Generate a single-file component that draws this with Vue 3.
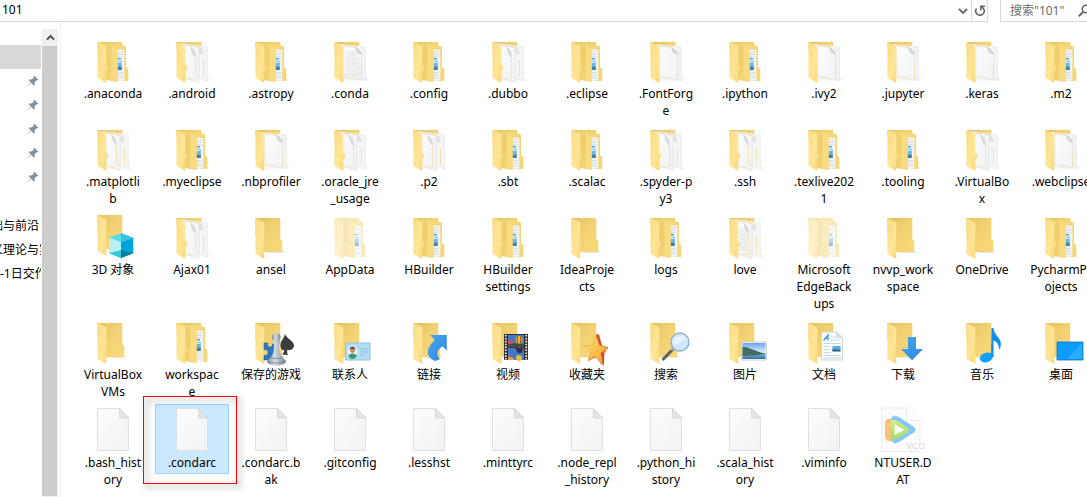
<script setup>
import { ref } from 'vue'

const address = ref('101')
const query = ref('')
const selected = ref('.condarc')

const pinned = [1, 2, 3, 4, 5]
const places = [
  { text: '础与前沿', cut: true },
  { text: '义理论与实', cut: true },
  { text: '-1日交作', cut: false }
]

const f = (kind, ...lines) => ({ kind, lines, name: lines.join('') })

const items = [
  f('full', '.anaconda'), f('two', '.android'), f('full', '.astropy'), f('text', '.conda'),
  f('full', '.config'), f('two', '.dubbo'), f('full', '.eclipse'), f('one', '.FontForg', 'e'),
  f('full', '.ipython'), f('one', '.ivy2'), f('one', '.jupyter'), f('one', '.keras'), f('full', '.m2'),

  f('two', '.matplotli', 'b'), f('full', '.myeclipse'), f('one', '.nbprofiler'), f('two', '.oracle_jre', '_usage'),
  f('two', '.p2'), f('full', '.sbt'), f('full', '.scalac'), f('two', '.spyder-p', 'y3'),
  f('two', '.ssh'), f('full', '.texlive202', '1'), f('full', '.tooling'), f('two', '.VirtualBo', 'x'), f('one', '.webclipse'),

  f('cube', '3D 对象'), f('two', 'Ajax01'), f('empty', 'ansel'), f('faded', 'AppData'),
  f('full', 'HBuilder'), f('full', 'HBuilder', 'settings'), f('empty', 'IdeaProje', 'cts'), f('full', 'logs'),
  f('twotext', 'love'), f('faded', 'Microsoft', 'EdgeBack', 'ups'), f('empty', 'nvvp_work', 'space'), f('empty', 'OneDrive'), f('full', 'PycharmPr', 'ojects'),

  f('empty', 'VirtualBox', 'VMs'), f('full', 'workspac', 'e'), f('games', '保存的游戏'), f('contacts', '联系人'),
  f('link', '链接'), f('video', '视频'), f('star', '收藏夹'), f('search', '搜索'),
  f('picture', '图片'), f('document', '文档'), f('download', '下载'), f('music', '音乐'), f('desktop', '桌面'),

  f('file', '.bash_hist', 'ory'), f('file', '.condarc'), f('file', '.condarc.b', 'ak'), f('file', '.gitconfig'),
  f('file', '.lesshst'), f('file', '.minttyrc'), f('file', '.node_repl', '_history'), f('file', '.python_hi', 'story'),
  f('file', '.scala_hist', 'ory'), f('file', '.viminfo'), f('vcd', 'NTUSER.D', 'AT')
]

const isFull = (k) => k === 'full' || k === 'faded'
const isOne = (k) => k === 'one' || k === 'text'
const isTwo = (k) => k === 'two' || k === 'twotext'
const isFolder = (k) => k !== 'file' && k !== 'vcd'
const isPlain = (k) => isFolder(k) && !isFull(k) && !isOne(k) && !isTwo(k)
</script>

<template>
  <div class="explorer">
    <svg class="defs" width="0" height="0" aria-hidden="true">
      <defs>
        <linearGradient id="back" x1="0" y1="0" x2="1" y2="1">
          <stop offset="0" stop-color="#e6c260" /><stop offset=".5" stop-color="#f2d274" /><stop offset="1" stop-color="#f9da76" />
        </linearGradient>
        <linearGradient id="front" x1="0" y1="0" x2="1" y2="1">
          <stop offset="0" stop-color="#f9dc82" /><stop offset=".6" stop-color="#ffe597" /><stop offset="1" stop-color="#f8d775" />
        </linearGradient>
        <linearGradient id="paper" x1="0" y1="0" x2="1" y2="1">
          <stop offset="0" stop-color="#fcfcfd" /><stop offset="1" stop-color="#f0f2f4" />
        </linearGradient>
        <linearGradient id="blue" x1="0" y1="0" x2="1" y2="1">
          <stop offset="0" stop-color="#4aa9f2" /><stop offset="1" stop-color="#2a83dc" />
        </linearGradient>
        <linearGradient id="pawn" x1="0" y1="0" x2="1" y2="0">
          <stop offset="0" stop-color="#7f8d98" /><stop offset=".4" stop-color="#d3dce2" /><stop offset="1" stop-color="#7b8790" />
        </linearGradient>
        <linearGradient id="gold" x1="0" y1="0" x2="1" y2="1">
          <stop offset="0" stop-color="#ffe27a" /><stop offset="1" stop-color="#f6a021" />
        </linearGradient>
        <linearGradient id="sky" x1="0" y1="0" x2="0" y2="1">
          <stop offset="0" stop-color="#6aa5f2" /><stop offset="1" stop-color="#e3f1fb" />
        </linearGradient>
        <linearGradient id="sea" x1="0" y1="0" x2="0" y2="1">
          <stop offset="0" stop-color="#8ac0dc" /><stop offset="1" stop-color="#2d6fa6" />
        </linearGradient>
        <linearGradient id="lime" x1="0" y1="0" x2="0" y2="1">
          <stop offset="0" stop-color="#d3ef84" /><stop offset="1" stop-color="#a2da6c" />
        </linearGradient>
      </defs>
    </svg>

    <header class="topbar">
      <div class="address">
        <input v-model="address" class="path" type="text" aria-label="地址" />
        <button class="drop" type="button" aria-label="历史记录">
          <svg width="10" height="6" viewBox="0 0 10 6"><path d="M1 1l4 4 4-4" fill="none" stroke="#666" stroke-width="1.8" /></svg>
        </button>
        <button class="reload" type="button" aria-label="刷新">
          <svg width="12" height="12" viewBox="0 0 12 12">
            <path d="M2.600 3.500A4.200 4.200 0 1 0 9.200 3.300L7.500 1.800" fill="none" stroke="#666" stroke-width="1.6" />
            <path d="M6.800 5.500V1.300H11" fill="none" stroke="#666" stroke-width="1.5" />
          </svg>
        </button>
      </div>
      <div class="search">
        <input v-model="query" type="text" placeholder="搜索&quot;101&quot;" aria-label="搜索" />
        <svg width="13" height="13" viewBox="0 0 13 13">
          <circle cx="8" cy="5" r="3.7" fill="none" stroke="#666" stroke-width="1.5" />
          <path d="M5.4 7.6L.8 12.2" stroke="#666" stroke-width="2" />
        </svg>
      </div>
    </header>

    <div class="body">
      <nav class="tree">
        <div class="node current"></div>
        <div v-for="p in pinned" :key="p" class="node">
          <svg class="pin" width="12" height="12" viewBox="0 0 12 12">
            <path d="M7.4.8L11.2 4.6 10.2 5.4 9.5 5.2 7.6 7.2 7.8 9.6 6.8 10.4 4.4 8 .8 11.4 .6 11.2 4 7.6 1.6 5.2 2.4 4.2 4.8 4.4 6.8 2.5 6.6 1.8z" fill="#84909b" />
          </svg>
        </div>
        <div class="node"></div>
        <div v-for="p in places" :key="p.text" class="node"><span :class="{ cut: p.cut }">{{ p.text }}</span></div>
      </nav>
      <div class="scroll">
        <button type="button" aria-label="向上滚动">
          <svg width="9" height="7" viewBox="0 0 9 7"><path d="M1 5.6L4.5 2 8 5.6" fill="none" stroke="#505050" stroke-width="2" /></svg>
        </button>
        <div class="thumb"></div>
      </div>

      <main class="files">
        <button
          v-for="it in items"
          :key="it.name"
          type="button"
          class="item"
          :class="{ selected: it.name === selected }"
          @click="selected = it.name"
        >
          <svg class="icon" :class="{ faded: it.kind === 'faded', raised: it.kind === 'cube' }" width="48" height="47" viewBox="0 0 48 47" aria-hidden="true">
            <g v-if="isFolder(it.kind)">
              <template v-if="isPlain(it.kind)">
                <path d="M33 36L38 38 35 39H17z" fill="#e6e6e6" />
                <path d="M8.500 4H33.300V25L35.300 27V38H17L8.500 20z" fill="url(#back)" />
              </template>
              <path v-else d="M8.500 4H33.300V12H8.500z" fill="url(#back)" />

              <template v-if="isFull(it.kind)">
                <path d="M20 6L33 7 37 8.500V29L39.300 31V43H33L20 40z" fill="#f5d778" />
                <path d="M27 11L35.300 12V42.500L27 43z" fill="#f1f3f5" />
                <path d="M28.500 14h5.500M28.500 16.500h5.500M28.500 19h5.500M28.500 34.500h5.500M28.500 37h5.500M28.500 39.500h5.500" stroke="#cfd6dd" stroke-width=".8" />
                <path d="M28 19.500l4 .5v2l-4-.5zM28 23.500l4.800-.5v5.500H28z" fill="#6bb4e6" />
                <path d="M28 28.500h4.800V32H28z" fill="#3e7fa2" />
                <path d="M28 24.500h4.500" stroke="#d7effa" />
                <path d="M9 4L22 7 28.600 11V44L17 42z" fill="#f2d478" />
                <path d="M22.500 7L28.600 11V44L22.500 42z" fill="#f9db80" />
                <path d="M17 9V42L20 40V31L22.500 27V8z" fill="#ecca68" opacity=".6" />
              </template>

              <template v-if="isOne(it.kind)">
                <path d="M37 40L42.500 41.500 39 43z" fill="#e3e3e3" />
                <path d="M14 6.500L37 8.500V42H17z" fill="#fafafa" stroke="#e7e7e7" stroke-width=".6" />
                <path d="M35.500 9L39.500 9.500V42.500L35.500 42z" fill="#f1f2f4" stroke="#e0e2e4" stroke-width=".5" />
                <path d="M18 8.500L30.500 9.500 35.500 15.500V42L18 39.500z" fill="url(#paper)" stroke="#dfe1e3" stroke-width=".6" />
                <path d="M17 7.500L30 8.700 32 11" fill="none" stroke="#f5dfa5" stroke-width=".8" />
                <path d="M29.500 9.500L31 14.500 35.500 16.500 33.500 12z" fill="#d9dbdd" stroke="#bfc1c3" stroke-width=".5" />
                <path d="M35.500 27V41M18 38.500L30 40.300" stroke="#f4e0a8" stroke-width=".7" />
                <g v-if="it.kind === 'text'" stroke="#d2d5d8" stroke-width=".7" stroke-dasharray="1.5 .5">
                  <path d="M20 13l9 .5M20 15l10 .5M20 17l11 .5M20 19l12.500 .5M20 21l13.500 .5M20 23l13.500 .5M20 25l13.500 .5M20 27l13.500 .5M20 29l13.500 .5M20 31l13.500 .5M20 33l13.500 1M20 35l13.500 1.500M20 37l13.500 1.500" />
                </g>
              </template>

              <template v-if="isTwo(it.kind)">
                <path d="M36 41L43 41.700 39 43z" fill="#e0e0e0" />
                <path d="M14 5.500L29 7.500 39.300 9V42.500L29 41z" fill="#f4f5f6" stroke="#e2e4e6" stroke-width=".6" />
                <path d="M33 9.500L35 16 30 14z" fill="#e6e7e8" stroke="#ccc" stroke-width=".5" />
                <path d="M35.500 22V39" stroke="#f3dc9d" stroke-width=".8" />
                <path d="M12 5.500L31 9.500V44.500L17.500 40.500z" fill="url(#paper)" stroke="#dddfe1" stroke-width=".6" />
                <path d="M13 6.200L24 8.500M26 8L32 10" stroke="#f3dc9d" stroke-width=".8" />
                <path d="M23 9.500L24.500 15.500 27.500 19.500 26.500 13z" fill="#e0e2e4" stroke="#bfc1c3" stroke-width=".5" />
                <path d="M27.600 20V41M18 39.500L26 41.500" stroke="#f3dc9d" stroke-width=".7" fill="none" />
                <path v-if="it.kind === 'twotext'" d="M18.500 15l5 1M18.500 17l7 1M18.500 19l8 1M18.500 21l8 1M18.500 23l8 1M18.500 25l8 1M18.500 27l8 1M18.500 29l8 1M18.500 31l8 1M18.500 33l8 1M18.500 35l8 1" stroke="#dcdfe1" stroke-width=".8" />
              </template>

              <path d="M8.500 4L17.300 8.500V45L8.500 40z" fill="url(#front)" />
              <path v-if="isFull(it.kind) || isTwo(it.kind)" d="M17 29L19 27V31L17.300 35z" fill="#fae08a" />
            </g>

            <g v-if="it.kind === 'cube'">
              <path d="M32 19.300L44.300 23.700 32 28.300 20 23.700z" fill="#5bd8e6" />
              <path d="M20 23.700L32 28.300V44L20 39.300z" fill="#8ee6ee" />
              <path d="M20 23.700L32 28.300V36L20 39.300z" fill="#b9f1f3" />
              <path d="M32 28.300L44.300 23.700V39.300L32 44z" fill="#00a3dc" />
              <path d="M32 36L44.300 39.300 32 44z" fill="#087f9f" />
              <path d="M20 39.300L32 36V44z" fill="#35c6d8" />
              <path d="M32 19.300L44.300 23.700 32 28.300z" fill="#36c1df" />
            </g>
            <g v-else-if="it.kind === 'games'">
              <path d="M17 24H21C20 26 21 28 23 28S26 26 25 24H30V41H17V36C19 37 21 36 21 33.500S19 30 17 31z" fill="#2f78bd" stroke="#1f5b98" stroke-width=".5" />
              <path d="M38 15C37 20 33 22 33.500 27C34 31 36 32 37.500 31C37 33 36 34.500 35 35.500L41 36C40 34 40 32 40.500 30.500C43 32 47 30 47 26.500C47 22 40 20 38 15z" fill="#3c3c3e" />
              <path d="M26.500 21H32.500L34 25H32C32 31 33 35 35.500 38L39 42C39 45 35 46.500 29.500 46.500S20 45 20 42L24 38C26.500 35 27 31 27 25H25z" fill="url(#pawn)" />
              <circle cx="29.300" cy="18.300" r="4.300" fill="url(#pawn)" />
              <path d="M23.500 38.500C27 40 32 40 35.500 38.500M20.500 42.500C25 44.500 34 44.500 38.500 42.500" fill="none" stroke="#6d7a84" stroke-width=".7" />
            </g>
            <g v-else-if="it.kind === 'contacts'">
              <path d="M19.500 24H44V41H19.500z" fill="#b4dcf3" stroke="#8fc2e4" />
              <circle cx="26.500" cy="32" r="5.200" fill="#e7f5fc" />
              <path d="M22.500 37C23 33.500 30 33.500 30.700 37C29 41 24 41 22.500 37z" fill="#389a72" />
              <circle cx="26.500" cy="31.500" r="2.400" fill="#c48964" />
              <path d="M23.800 31C23 26.500 30 26.500 29.300 31L28 29.500H25z" fill="#33302e" />
              <path d="M34 30h8M34 33h8M34 36h6" stroke="#8cc2e4" />
            </g>
            <path v-else-if="it.kind === 'link'" d="M25 16H41.800V31.500L37.500 27.300C32 31 30.500 35 35 40L30.500 42C21 39 20 29.500 30 21z" fill="url(#blue)" />
            <g v-else-if="it.kind === 'video'">
              <path d="M20 15H44V41H20z" fill="#34302e" />
              <path d="M21.800 16V41M42.200 16V41" stroke="#e8e8e8" stroke-width="1.800" stroke-dasharray="1.600 1.300" />
              <path d="M24 16H40V27.500H24zM24 29H40V41H24z" fill="#4178c8" />
              <path d="M24 21L30 23 32 27.500H24zM24 36L30 40V41H24z" fill="#d74b68" />
              <path d="M24 25.500L31 24 40 25.500V27.500H24z" fill="#2d5638" />
              <ellipse cx="35" cy="21" rx="3.600" ry="4" fill="#e5bb32" />
              <path d="M33.500 17.500Q32 21 34 25M36.500 17.500Q38 21 36 25" stroke="#a32d29" fill="none" />
              <ellipse cx="35.500" cy="31" rx="3" ry="3" fill="#8d4f75" />
              <circle cx="35" cy="39" r="3" fill="#e7bc38" />
              <path d="M24 41V38.500Q27 37 30 39.500V41z" fill="#dda44b" />
              <path d="M31.500 29L39 29 37.500 34H34z" fill="#382850" />
            </g>
            <g v-else-if="it.kind === 'star'">
              <path d="M33.700 15L36 15.500 39 26.500 45.300 28.500 41.500 33.500 40.800 46.500 38 45 33 38 25 42z" fill="#cf5230" />
              <path d="M32.500 16L36.500 26.500 45 29.300 37.500 34 39.500 45.500 32 37 25 41.500 28 33 21 26.700 29.500 26.500z" fill="url(#gold)" stroke="#eda33a" stroke-width=".6" />
            </g>
            <g v-else-if="it.kind === 'search'">
              <path d="M31 30L20.500 41" stroke="#59636c" stroke-width="3" />
              <path d="M32 28L29 31" stroke="#a9b3bb" stroke-width="2.500" />
              <circle cx="38" cy="23" r="9" fill="#cde8fa" stroke="#8fb0c6" stroke-width="1.300" />
              <path d="M31.500 22A6.800 6.800 0 0 1 44 20C40 20 37 25 32 26z" fill="#eaf7ff" />
            </g>
            <g v-else-if="it.kind === 'picture'">
              <path d="M20.500 23H45.500V41H20.500z" fill="#fff" stroke="#cfcfcf" />
              <path d="M21.500 24H44.500V34H21.500z" fill="url(#sky)" />
              <path d="M21.500 34H44.500V40H21.500z" fill="url(#sea)" />
              <path d="M21.500 28C27 27 31 32 44.500 34.500L38 36 21.500 37z" fill="#456c62" />
            </g>
            <g v-else-if="it.kind === 'document'">
              <path d="M21.500 13H36.500L42.500 18.500V41H21.500z" fill="#fafbfc" stroke="#d0d3d6" />
              <path d="M36.500 13V18.500H42.500z" fill="#e1e4e7" stroke="#c8ccd0" stroke-width=".6" />
              <path d="M23.500 21.500L28 16V21.500M25 19.500H28" fill="none" stroke="#3c9bd4" stroke-width="1.200" />
              <path d="M31 18h4M31 21h9M23.500 24.500h17M23.500 27.500h7M23.500 30.500h7M23.500 33.500h7M23.500 36.500h17M23.500 39h17" stroke="#bedcee" />
              <path d="M32.500 27H40.500V32H32.500z" fill="#5ba9e3" /><path d="M32.500 30L40.500 31V32.500H32.500z" fill="#31607e" />
            </g>
            <path v-else-if="it.kind === 'download'" d="M29 18H37V30H44L33 41.300 22 30H29z" fill="url(#blue)" />
            <g v-else-if="it.kind === 'music'">
              <ellipse cx="28.300" cy="38.500" rx="6.600" ry="4.800" transform="rotate(-18 28.300 38.500)" fill="#12a0ff" />
              <path d="M33.500 9H35.500C36 17 45 19 42.500 28L41 31C41 25 39 23 35.500 21.500V38H33z" fill="#0d8fee" />
            </g>
            <g v-else-if="it.kind === 'desktop'">
              <path d="M20 23H46V41H20z" fill="#0c9cfb" stroke="#1273bd" stroke-width=".8" />
              <path d="M45 24V40H30z" fill="#29adff" />
            </g>
            <g v-else-if="it.kind === 'file'">
              <path d="M8.500 1.500H30.500L39.500 11V43.500H8.500z" fill="url(#paper)" stroke="#dfe0e2" />
              <path d="M30.500 1.500L39.500 11H30.500z" fill="#e4e5e7" stroke="#d2d3d5" stroke-width=".8" />
            </g>
            <g v-else-if="it.kind === 'vcd'">
              <path d="M2.500 1H27.500L41 13.500V36M41 44.500H2.500V1" fill="#fbfbfb" stroke="#ececec" />
              <path d="M27.500 1V13.500H41" fill="#fff" stroke="#e8e8e8" />
              <path d="M13 12H9Q6 12 6 17V29Q6 34 10 34H13z" fill="#ffc07e" />
              <path d="M14 9Q17 8 23 12L35 20Q38 22.500 35 25.500L20 35Q14 38 12 33V13Q12 10 14 9z" fill="#86c8fb" />
              <path d="M13 13Q15 12 20 15L29 21Q31 23 29 25L18 32Q13 34 11.500 30V16Q11.500 13 13 13z" fill="url(#lime)" />
              <path d="M15.500 17.500L25.500 23 15.500 28z" fill="#fff" />
              <text x="27" y="42" font-size="9" font-family="Liberation Sans, Arial, sans-serif" fill="#d8d8d8">VCD</text>
            </g>
          </svg>
          <span class="label"><span v-for="line in it.lines" :key="line">{{ line }}</span></span>
          <span v-if="it.name === '.condarc'" class="mark"></span>
        </button>
      </main>
    </div>
  </div>
</template>

<style>
html,
body {
  margin: 0;
  background: #fff;
}
</style>

<style scoped>
.explorer {
  display: flex;
  flex-direction: column;
  min-height: 100vh;
  overflow: hidden;
  background: #fff;
  color: #000;
  font: 12px/17px "Noto Sans", "Noto Sans CJK SC", sans-serif;
}
.defs {
  position: absolute;
}
button,
input {
  padding: 0;
  border: 0;
  background: none;
  color: inherit;
  font: inherit;
}
.topbar {
  display: flex;
  gap: 12px;
  height: 22px;
  box-sizing: border-box;
}
.address {
  display: flex;
  flex: 1;
  border: solid #d9d9d9;
  border-width: 0 1px 1px 0;
}
.path {
  flex: 1;
  min-width: 0;
  padding: 0 0 2px 2px;
}
.drop,
.reload {
  display: flex;
  align-items: center;
  justify-content: center;
  width: 16px;
}
.reload {
  border-left: 1px solid #d9d9d9;
}
.search {
  display: flex;
  align-items: center;
  width: 87px;
  box-sizing: border-box;
  padding-left: 9px;
  overflow: hidden;
  border: solid #d9d9d9;
  border-width: 0 0 1px 1px;
}
.search input {
  flex: none;
  width: 68px;
}
.search input::placeholder {
  color: #6d6d6d;
  opacity: 1;
}
.search svg {
  flex: none;
}
.body {
  display: flex;
  flex: 1;
}
.tree {
  width: 41px;
  padding-top: 23px;
  overflow: hidden;
}
.node {
  display: flex;
  align-items: center;
  height: 24px;
  white-space: nowrap;
}
.node.current {
  background: #d9d9d9;
}
.pin {
  margin-left: 27px;
}
.cut {
  margin-left: -9px;
}
.scroll {
  display: flex;
  flex-direction: column;
  width: 16px;
  margin: 7px 2px 0 1px;
  background: #f0f0f0;
}
.scroll button {
  display: flex;
  align-items: center;
  justify-content: center;
  height: 17px;
}
.thumb {
  flex: 1;
  margin: 0 1px 1px 0;
  background: #cdcdcd;
}
.files {
  display: grid;
  flex: 1;
  grid-template-columns: repeat(13, 74px);
  gap: 1px 5px;
  align-content: start;
  align-items: start;
  min-width: 0;
  padding: 13px 0 0 15px;
  overflow: hidden;
  border-left: 1px solid #f0f0f0;
}
.item {
  position: relative;
  display: flex;
  flex-direction: column;
  align-items: center;
  padding: 3px 0;
}
.item.selected {
  background: #cce8ff;
  box-shadow: inset 0 0 0 1px #99d1ff;
}
.icon {
  flex: none;
  overflow: visible;
}
.icon.faded {
  opacity: .5;
}
.icon.raised > g:first-child {
  transform: translateY(-3px);
}
.label {
  display: flex;
  flex-direction: column;
  align-items: center;
  white-space: nowrap;
}
.mark {
  position: absolute;
  inset: -8px -8px -10px -12px;
  border: 1px solid #f00;
  filter: drop-shadow(3px 3px 3px rgba(0, 0, 0, .6));
}
</style>
